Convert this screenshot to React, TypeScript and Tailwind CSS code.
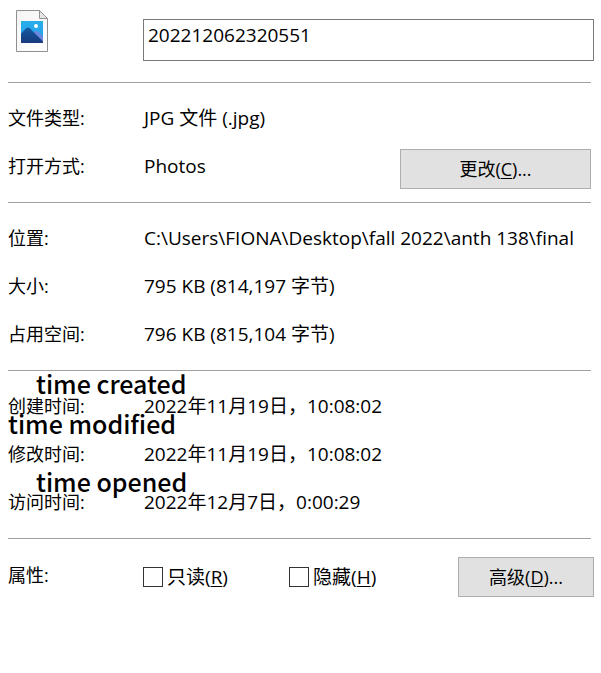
import type { ReactNode } from 'react';

type Row = { label: string; value: string };

const sizeRows: Row[] = [
  { label: '位置:', value: 'C:\\Users\\FIONA\\Desktop\\fall 2022\\anth 138\\final' },
  { label: '大小:', value: '795 KB (814,197 字节)' },
  { label: '占用空间:', value: '796 KB (815,104 字节)' },
];

const timeRows: Row[] = [
  { label: '创建时间:', value: '2022年11月19日，10:08:02' },
  { label: '修改时间:', value: '2022年11月19日，10:08:02' },
  { label: '访问时间:', value: '2022年12月7日，0:00:29' },
];

function ImageFileIcon() {
  return (
    <svg width="32" height="42" viewBox="0 0 32 42" aria-hidden="true">
      <defs>
        <linearGradient id="page" x1="0" y1="0" x2="1" y2="1">
          <stop offset="0" stopColor="#f4f4f4" />
          <stop offset="1" stopColor="#ffffff" />
        </linearGradient>
        <linearGradient id="sky" x1="0" y1="0" x2="0" y2="1">
          <stop offset="0" stopColor="#27aee9" />
          <stop offset="1" stopColor="#2a9df0" />
        </linearGradient>
        <linearGradient id="hill" x1="0" y1="0" x2="0" y2="1">
          <stop offset="0" stopColor="#135ba3" />
          <stop offset="1" stopColor="#183a7c" />
        </linearGradient>
      </defs>
      <path d="M.5.5H23.5L31.5 8.5V41.5H.5Z" fill="url(#page)" stroke="#909090" />
      <path d="M23.5.5V8.5H31.5Z" fill="#e6e6e6" stroke="#909090" />
      <path d="M5 11H27V33H5Z" fill="url(#sky)" />
      <path d="M13 28L19 21.5Q20.5 20.5 22 21.5L27 26.5V33H13Z" fill="#6b87df" />
      <path d="M5 23.5L10.5 18Q12 17 13.5 18L27 31.5V33H5Z" fill="url(#hill)" />
      <circle cx="20" cy="16" r="2" fill="#fff" />
    </svg>
  );
}

function InfoRow({ label, value, children }: Row & { children?: ReactNode }) {
  return (
    <div className="flex h-12 items-center">
      <dt className="w-[136px] shrink-0 text-[18px]">{label}</dt>
      <dd className="min-w-0 flex-1 whitespace-nowrap">{value}</dd>
      {children}
    </div>
  );
}

function Check({ text, hotkey }: { text: string; hotkey: string }) {
  return (
    <label className="flex w-[146px] items-center gap-1 text-[19px]">
      <input
        type="checkbox"
        className="h-5 w-5 appearance-none border border-[#333] bg-white checked:bg-[#333]"
      />
      <span>
        {text}(<u className="underline-offset-2">{hotkey}</u>)
      </span>
    </label>
  );
}

export default function App() {
  return (
    <main className="min-h-screen bg-white pl-2 font-['Open_Sans','Noto_Sans_CJK_SC',sans-serif] text-[19px] leading-6 text-black">
      <header className="flex h-[82px] items-start pr-[7px]">
        <div className="w-[135px] shrink-0 pt-[10px] pl-2">
          <ImageFileIcon />
        </div>
        <input
          type="text"
          aria-label="文件名"
          defaultValue="202212062320551"
          className="mt-[19px] h-[42px] min-w-0 flex-1 border border-[#7a7a7a] px-1 pb-2.5 outline-none"
        />
      </header>

      <dl className="mr-[10px] border-t border-[#a0a0a0] pt-[11px] pb-3">
        <InfoRow label="文件类型:" value="JPG 文件 (.jpg)" />
        <InfoRow label="打开方式:" value="Photos">
          <button
            type="button"
            className="mt-1.5 h-10 w-[191px] border border-[#adadad] bg-[#e1e1e1] text-[18px]"
          >
            更改(<u className="underline-offset-2">C</u>)...
          </button>
        </InfoRow>
      </dl>

      <dl className="mr-[10px] border-t border-[#a0a0a0] pt-[11px] pb-3">
        {sizeRows.map((row) => (
          <InfoRow key={row.label} {...row} />
        ))}
      </dl>

      <section className="relative mr-[10px] border-t border-[#a0a0a0] pt-[11px] pb-3">
        <dl>
          {timeRows.map((row) => (
            <InfoRow key={row.label} {...row} />
          ))}
        </dl>
        {/* translated notes written over the labels */}
        <div className="font-['Noto_Sans_CJK_SC',sans-serif] text-[25px] leading-8 font-medium whitespace-nowrap">
          <span className="absolute -top-1 left-7">time created</span>
          <span className="absolute top-9 left-0">time modified</span>
          <span className="absolute top-[94px] left-7">time opened</span>
        </div>
      </section>

      <div className="mr-[10px] border-t border-[#a0a0a0]" />
      <div className="flex items-start pt-[18px] pr-[7px]">
        <span className="w-[135px] shrink-0 pt-1.5 text-[18px]">属性:</span>
        <div className="flex flex-1 pt-2">
          <Check text="只读" hotkey="R" />
          <Check text="隐藏" hotkey="H" />
        </div>
        <button
          type="button"
          className="h-10 w-[136px] shrink-0 border border-[#adadad] bg-[#e1e1e1] text-[18px]"
        >
          高级(<u className="underline-offset-2">D</u>)...
        </button>
      </div>
    </main>
  );
}
